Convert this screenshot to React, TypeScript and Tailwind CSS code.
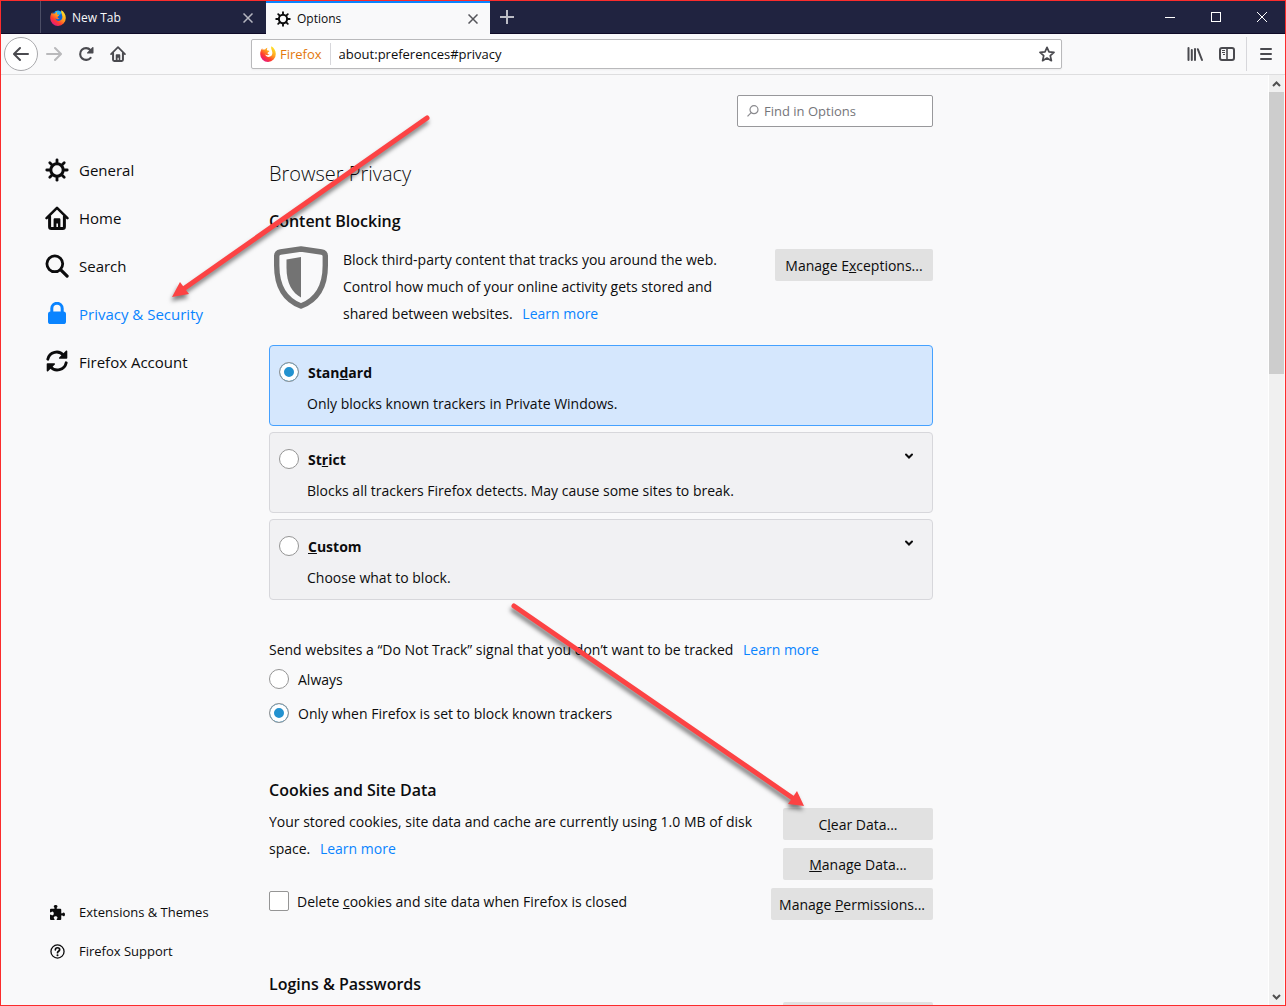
import { useState } from "react";
import type { ReactNode } from "react";

type IconProps = { className?: string };

const GearIcon = ({ className }: IconProps) => (
  <svg viewBox="0 0 24 24" className={className} fill="none" stroke="currentColor" strokeLinecap="round">
    <circle cx="12" cy="12" r="6.2" strokeWidth="3" />
    {[0, 45, 90, 135, 180, 225, 270, 315].map((deg) => (
      <path key={deg} d="M12 5V1.8" strokeWidth="2.8" transform={`rotate(${deg} 12 12)`} />
    ))}
  </svg>
);

const HomeIcon = ({ className }: IconProps) => (
  <svg viewBox="0 0 24 24" className={className} fill="none" stroke="currentColor" strokeLinecap="round" strokeLinejoin="round">
    <path d="M1.6 12.2 12 1.8l10.4 10.4" strokeWidth="2.6" />
    <path d="M4.6 10.5v10.2c0 1 .7 1.7 1.7 1.7h11.4c1 0 1.7-.7 1.7-1.7V10.5" strokeWidth="3" />
    <path d="M8.600 22v-8.400c0-.8.5-1.300 1.300-1.300h4.200c.8 0 1.300.5 1.300 1.300V22h-2.400v-4.500h-1.600V22z" fill="currentColor" stroke="none" />
  </svg>
);

const SearchIcon = ({ className }: IconProps) => (
  <svg viewBox="0 0 24 24" className={className} fill="none" stroke="currentColor" strokeLinecap="round">
    <circle cx="9.8" cy="9.8" r="7.9" strokeWidth="2.8" />
    <path d="m15.8 15.8 6.3 6.3" strokeWidth="3.2" />
  </svg>
);

const LockIcon = ({ className }: IconProps) => (
  <svg viewBox="0 0 24 24" className={className}>
    <path d="M6.8 12V6.500a5.200 5.200 0 0 1 10.400 0V12" fill="none" stroke="currentColor" strokeWidth="3" />
    <rect x="3" y="9.500" width="18" height="12.500" rx="2.600" fill="currentColor" />
  </svg>
);

const SyncIcon = ({ className }: IconProps) => (
  <svg viewBox="0 0 24 24" className={className} fill="none" stroke="currentColor" strokeWidth="2.9" strokeLinecap="round">
    <path d="M2.8 9.200A9 9 0 0 1 18.600 5.400" />
    <path d="M21.200 12.800A9 9 0 0 1 5.400 16.600" />
    <path d="M22.300 1.200V8a.8.8 0 0 1-.8.8h-6.800c-.8 0-1-.8-.5-1.300l6.700-6.800c.5-.5 1.400-.3 1.400.5z" fill="currentColor" stroke="none" />
    <path d="M1.700 20.800V14c0-.5.3-.8.8-.8h6.800c.8 0 1 .8.5 1.300l-6.700 6.800c-.5.5-1.400.3-1.400-.5z" fill="currentColor" stroke="none" />
  </svg>
);

const PuzzleIcon = ({ className }: IconProps) => (
  <svg viewBox="0 0 16 16" className={className} fill="currentColor">
    <path d="M14.5 8c-.971 0-1 1-1.75 1a.765.765 0 0 1-.75-.75V5a1 1 0 0 0-1-1H7.75A.765.765 0 0 1 7 3.25c0-.75 1-.779 1-1.75C8 .635 7.1 0 6 0S4 .635 4 1.5c0 .971 1 1 1 1.75a.765.765 0 0 1-.75.75H1a1 1 0 0 0-1 1v2.25A.765.765 0 0 0 .75 8c.75 0 .779-1 1.75-1C3.365 7 4 7.9 4 9s-.635 2-1.5 2c-.971 0-1-1-1.75-1a.765.765 0 0 0-.75.75V15a1 1 0 0 0 1 1h3.25a.765.765 0 0 0 .75-.75c0-.75-1-.779-1-1.75 0-.865.9-1.5 2-1.5s2 .635 2 1.5c0 .971-1 1-1 1.75a.765.765 0 0 0 .75.75H11a1 1 0 0 0 1-1v-3.25a.765.765 0 0 1 .75-.75c.75 0 .779 1 1.75 1 .865 0 1.5-.9 1.5-2s-.635-2-1.5-2z" />
  </svg>
);

const HelpIcon = ({ className }: IconProps) => (
  <svg viewBox="0 0 16 16" className={className} fill="none" stroke="currentColor" strokeLinecap="round">
    <circle cx="8" cy="8" r="7" strokeWidth="1.4" />
    <path d="M5.7 6.2C5.7 4.8 6.7 4 8 4s2.3.8 2.3 2.1c0 1.6-2.3 1.6-2.3 3.2" strokeWidth="1.8" />
    <circle cx="8" cy="11.9" r="1.1" fill="currentColor" stroke="none" />
  </svg>
);

const ArrowIcon = ({ className }: IconProps) => (
  <svg viewBox="0 0 16 16" className={className} fill="currentColor">
    <path d="M15 7H3.414l4.293-4.293a1 1 0 0 0-1.414-1.414l-6 6a1 1 0 0 0 0 1.414l6 6a1 1 0 0 0 1.414-1.414L3.414 9H15a1 1 0 0 0 0-2z" />
  </svg>
);

const ReloadIcon = ({ className }: IconProps) => (
  <svg viewBox="0 0 16 16" className={className}>
    <path d="M12.4 4A5.9 5.9 0 1 0 12.6 11.8" fill="none" stroke="currentColor" strokeWidth="2.1" strokeLinecap="round" />
    <path d="M15.5 1.6v5.2c0 .4-.3.7-.7.7H9.6c-.6 0-.8-.6-.4-1l5.2-5.3c.4-.4 1.1-.2 1.1.4z" fill="currentColor" />
  </svg>
);

const LibraryIcon = ({ className }: IconProps) => (
  <svg viewBox="0 0 16 16" className={className} fill="none" stroke="currentColor" strokeWidth="2" strokeLinecap="round">
    <path d="M1.500 2v12M4.800 4v10M8 3v11M10.800 3.200 15 14" />
  </svg>
);

const SidebarIcon = ({ className }: IconProps) => (
  <svg viewBox="0 0 16 16" className={className} fill="none" stroke="currentColor">
    <rect x="1" y="2" width="14" height="12" rx="2" strokeWidth="2" />
    <path d="M8 2v12" strokeWidth="1.6" />
    <path d="M3 4.5h3M3 6.5h3M4 8.5h2" strokeWidth="1" />
  </svg>
);

const StarIcon = ({ className }: IconProps) => (
  <svg viewBox="0 0 16 16" className={className} fill="none" stroke="currentColor" strokeWidth="1.7" strokeLinejoin="round">
    <path d="M8 1.3 10 5.9l5 .5-3.7 3.3 1.1 5L8 12.1l-4.4 2.6 1.1-5L1 6.4l5-.5z" />
  </svg>
);

const ShieldIcon = ({ className }: IconProps) => (
  <svg viewBox="0 0 54 63" className={className}>
    <path d="M27 3 47.5 6c2.3.4 3.8 1.8 3.8 4v9.400c0 19-7.300 34-24.300 40.600C10 53.400 2.700 38.400 2.700 19.400V10c0-2.200 1.500-3.600 3.800-4z" fill="none" stroke="currentColor" strokeWidth="5.400" strokeLinejoin="round" />
    <path d="M27 11v40.500c-8.500-4.500-14.500-14-14.500-29.500v-8.500z" fill="currentColor" />
  </svg>
);

const FirefoxLogo = ({ className, globe }: IconProps & { globe?: boolean }) => {
  const id = globe ? "flame-tab" : "flame-url";
  return (
    <svg viewBox="0 0 16 16" className={className}>
      <defs>
        <linearGradient id={id} x1="0.85" y1="0.1" x2="0.2" y2="0.95">
          <stop offset="0" stopColor="#ffe226" />
          <stop offset="0.4" stopColor="#ff9a1f" />
          <stop offset="0.7" stopColor="#ff3b2f" />
          <stop offset="1" stopColor="#e31587" />
        </linearGradient>
      </defs>
      {globe && <circle cx="8" cy="7" r="6.400" fill="#0a64d8" />}
      {globe && <path d="M5 1.500c2-1.100 5-.8 6.500 1L10 5 6 4z" fill="#28b3f5" />}
      <path
        d="M11.300.3c2.700 1.500 4.500 4.300 4.500 7.700A7.800 7.800 0 0 1 .2 8.200C.2 6 .9 3.900 2.200 2.300l.4 1.500c.8-.4 1.700-.5 2.500-.3C5.600 2.600 6.500 2 7.500 1.800 6.900 2.600 6.700 3.400 7 4.100c.5.800 1.800.4 2.300.9.200.7-1.700 1.300-1.700 2-.1 1 .9 1.500 2 1.300-1 1.100-3 1.200-4.400.3.700 2 3 2.900 4.900 2 2.200-1 2.800-3.600 1.900-5.700C11.500 3.600 10.800 2 11.300.3z"
        fill={`url(#${id})`}
      />
    </svg>
  );
};

const CloseIcon = ({ className }: IconProps) => (
  <svg viewBox="0 0 10 10" className={className} fill="none" stroke="currentColor" strokeWidth="1.500">
    <path d="m.5.5 9 9m0-9-9 9" />
  </svg>
);

const navItems = [
  { label: "General", Icon: GearIcon },
  { label: "Home", Icon: HomeIcon },
  { label: "Search", Icon: SearchIcon },
  { label: "Privacy & Security", Icon: LockIcon },
  { label: "Firefox Account", Icon: SyncIcon },
];

const blockingModes = [
  { id: "standard", label: <>Stan<u>d</u>ard</>, text: "Only blocks known trackers in Private Windows.", expandable: false },
  { id: "strict", label: <>St<u>r</u>ict</>, text: "Blocks all trackers Firefox detects. May cause some sites to break.", expandable: true },
  { id: "custom", label: <><u>C</u>ustom</>, text: "Choose what to block.", expandable: true },
];

const radioClass =
  "size-5 shrink-0 appearance-none rounded-full border border-[#959595] bg-white checked:bg-[#2292d0] checked:shadow-[inset_0_0_0_4px_white]";

const PrefButton = ({ children, className = "", label }: { children?: ReactNode; className?: string; label?: string }) => (
  <button aria-label={label} className={`h-8 shrink-0 rounded-xs bg-[#e1e1e1] px-2 pt-px text-sm whitespace-nowrap ${className}`}>
    {children}
  </button>
);

const LearnMore = () => (
  <a href="#learn-more" className="ml-[6px] text-[#0a84ff]">Learn more</a>
);

const TabStrip = () => (
  <div className="flex h-[33px] shrink-0 border-b border-[#0f0b28] bg-[#202340] text-xs text-[#f9f9fa]">
    <div className="w-10 border-r border-[#4c4e66]"></div>
    <div className="flex w-[225px] items-center border-t-2 border-transparent pr-[13px] pl-[9px]">
      <FirefoxLogo globe className="mr-[6px] size-4" />
      <span className="flex-1">New Tab</span>
      <button aria-label="Close New Tab" className="text-[#b5b6c0]"><CloseIcon className="size-[10px]" /></button>
    </div>
    <div className="-mb-px flex w-56 items-center border-t-2 border-[#0a84ff] bg-[#f9f9fa] pr-3 pl-[9px] text-[#0c0c0d]">
      <GearIcon className="mr-[6px] size-4" />
      <span className="flex-1">Options</span>
      <button aria-label="Close Options" className="text-[#55555a]"><CloseIcon className="size-[10px]" /></button>
    </div>
    <button aria-label="New tab" className="flex w-[34px] items-center justify-center text-[#bcbdc6]">
      <svg viewBox="0 0 14 14" className="size-[14px]" stroke="currentColor" strokeWidth="2"><path d="M7 0v14M0 7h14" /></svg>
    </button>
    <div className="ml-auto flex">
      <button aria-label="Minimize" className="flex w-[46px] items-center justify-center">
        <span className="h-px w-[10px] bg-white"></span>
      </button>
      <button aria-label="Maximize" className="flex w-[46px] items-center justify-center">
        <span className="size-[10px] border border-white"></span>
      </button>
      <button aria-label="Close" className="flex w-[46px] items-center justify-center">
        <svg viewBox="0 0 10 10" className="size-[10px]" stroke="white"><path d="m0 0 10 10M10 0 0 10" /></svg>
      </button>
    </div>
  </div>
);

const Toolbar = () => (
  <div className="flex h-[41px] shrink-0 items-center border-b border-[#dededf] pl-[3px] text-[#4a4a4f]">
    <button aria-label="Back" className="flex size-[34px] items-center justify-center rounded-full border border-[#a9a9ac] bg-white">
      <ArrowIcon className="size-4" />
    </button>
    <button aria-label="Forward" className="flex w-8 justify-center text-[#b9b9bb]"><ArrowIcon className="size-4 rotate-180" /></button>
    <button aria-label="Reload" className="flex w-8 justify-center"><ReloadIcon className="size-4" /></button>
    <button aria-label="Home" className="flex w-8 justify-center"><HomeIcon className="size-4" /></button>
    <div className="mr-[117px] ml-[117px] flex h-[30px] flex-1 items-center rounded-xs border border-[#b9b9bb] bg-white pr-[6px] pl-2 shadow-xs">
      <FirefoxLogo className="size-4" />
      <span className="ml-1 border-r border-[#d7d7db] pt-[2px] pr-2 text-[13px] text-[#e3780b]">Firefox</span>
      <input
        aria-label="Address"
        defaultValue="about:preferences#privacy"
        className="min-w-0 flex-1 bg-transparent pt-[2px] pl-2 text-[13px] text-[#0c0c0d] outline-none"
      />
      <button aria-label="Bookmark this page"><StarIcon className="size-4" /></button>
    </div>
    <button aria-label="Library" className="flex w-8 justify-center"><LibraryIcon className="size-4" /></button>
    <button aria-label="Sidebars" className="flex w-8 justify-center"><SidebarIcon className="size-4" /></button>
    <div className="ml-[3px] h-[34px] border-l border-[#d7d7db]"></div>
    <button aria-label="Menu" className="flex w-[38px] justify-center">
      <svg viewBox="0 0 12 12" className="size-3" stroke="currentColor" strokeWidth="2" strokeLinecap="round"><path d="M1 1h10M1 6h10M1 11h10" /></svg>
    </button>
  </div>
);

const Sidebar = () => (
  <nav className="flex w-[268px] shrink-0 flex-col pt-[71px] pb-[34px] pl-11 text-[#0c0c0d]">
    {navItems.map(({ label, Icon }) => (
      <a
        key={label}
        href="#category"
        className={`flex h-12 items-center gap-[10px] text-[15px] ${label === "Privacy & Security" ? "text-[#0a84ff]" : ""}`}
      >
        <Icon className="size-6" />
        {label}
      </a>
    ))}
    <a href="#extensions" className="mt-auto flex h-[39px] items-center text-[13px]">
      <PuzzleIcon className="mr-[14px] ml-[5px] size-[15px]" />
      Extensions &amp; Themes
    </a>
    <a href="#support" className="flex h-[39px] items-center text-[13px]">
      <HelpIcon className="mr-[14px] ml-[5px] size-[15px]" />
      Firefox Support
    </a>
  </nav>
);

const Scrollbar = () => (
  <div className="mr-px flex w-4 shrink-0 flex-col items-center border-l border-white bg-[#f0f0f0] text-[#505050]">
    <svg viewBox="0 0 15 17" className="h-[17px] w-[15px]" fill="none" stroke="currentColor" strokeWidth="2"><path d="m4 11 3.500-3.500L11 11" /></svg>
    <div className="h-[282px] w-full bg-[#cdcdcd]"></div>
    <svg viewBox="0 0 15 17" className="mt-auto h-[17px] w-[15px]" fill="none" stroke="currentColor" strokeWidth="2"><path d="m4 7 3.500 3.500L11 7" /></svg>
  </div>
);

// Red callout arrows drawn over the page
const Callouts = () => (
  <svg className="pointer-events-none absolute top-0 left-0 h-full w-full" fill="#fc4344" stroke="#fc4344">
    <g style={{ filter: "drop-shadow(-1px 4px 2px rgba(0,0,0,0.5))" }}>
      <path d="M426 117 181 289" strokeWidth="5" strokeLinecap="round" />
      <path d="m171 296 8-15 9 12z" stroke="none" />
    </g>
    <g style={{ filter: "drop-shadow(-1px 4px 2px rgba(0,0,0,0.5))" }}>
      <path d="M513 605 793 798" strokeWidth="5" strokeLinecap="round" />
      <path d="m803 805-16-2 9-13z" stroke="none" />
    </g>
  </svg>
);

const App = () => {
  const [mode, setMode] = useState("standard");

  return (
    <div className="relative flex h-screen flex-col overflow-hidden border border-[#fb2c2c] bg-[#f9f9fa] font-['Open_Sans',sans-serif] text-[#0c0c0d]">
      <TabStrip />
      <Toolbar />
      <div className="flex min-h-0 flex-1">
        <Sidebar />
        <main className="min-w-0 flex-1 overflow-hidden pt-5 text-sm">
          <div className="max-w-[664px]">
            <label className="ml-auto flex h-8 w-[196px] items-center rounded-xs border border-[#98989b] bg-white pl-[9px]">
              <svg viewBox="0 0 12 12" className="size-3 text-[#8a8a8e]" fill="none" stroke="currentColor" strokeWidth="1.200">
                <circle cx="7" cy="4.700" r="4" />
                <path d="M4.200 7.600.5 11.400" />
              </svg>
              <input aria-label="Find in Options" placeholder="Find in Options" className="ml-[5px] w-40 text-[13px] outline-none placeholder:text-[#75757a]" />
            </label>

            <h1 className="mt-[33px] text-xl leading-7 font-light">Browser Privacy</h1>

            <section>
              <h2 className="mt-[21px] text-base leading-6 font-semibold">Content Blocking</h2>
              <div className="mt-[13px] flex items-start">
                <ShieldIcon className="mx-[5px] h-[63px] w-[54px] shrink-0 text-[#737373]" />
                <p className="ml-[10px] max-w-[400px] leading-[27px]">
                  Block third-party content that tracks you around the web. Control how much of your online activity gets stored and shared between websites. <LearnMore />
                </p>
                <PrefButton className="mt-[3px] ml-auto w-[158px]">Manage E<u>x</u>ceptions...</PrefButton>
              </div>

              <div className="mt-[18px] flex flex-col gap-[6px]">
                {blockingModes.map(({ id, label, text, expandable }) => (
                  <div
                    key={id}
                    className={`flex h-[81px] items-start rounded-sm border pt-4 pl-[9px] ${
                      mode === id ? "border-[#45a1ff] bg-[#d5e7fd]" : "border-[#d7d7db] bg-[#f1f1f3]"
                    }`}
                  >
                    <input type="radio" id={id} name="blocking" checked={mode === id} onChange={() => setMode(id)} className={radioClass} />
                    <div className="ml-2 flex-1">
                      <label htmlFor={id} className="block pl-px leading-[22px] font-bold">{label}</label>
                      <p className="mt-[9px] leading-[22px]">{text}</p>
                    </div>
                    {expandable && (
                      <button aria-label="Show details" className="mt-[3px] mr-[18px]">
                        <svg viewBox="0 0 10 8" className="h-2 w-[10px]" fill="none" stroke="currentColor" strokeWidth="2" strokeLinecap="round"><path d="m2 2.500 3 3 3-3" /></svg>
                      </button>
                    )}
                  </div>
                ))}
              </div>

              <p className="mt-9 leading-[27px]">
                Send websites a “Do Not Track” signal that you don’t want to be tracked <LearnMore />
              </p>
              <div className="mt-[6px] flex h-5 items-center gap-[9px]">
                <input type="radio" id="dnt-always" name="dnt" className={radioClass} />
                <label htmlFor="dnt-always" className="pt-px">Always</label>
              </div>
              <div className="mt-[14px] flex h-5 items-center gap-[9px]">
                <input type="radio" id="dnt-default" name="dnt" defaultChecked className={radioClass} />
                <label htmlFor="dnt-default" className="pt-px">Only when Firefox is set to block known trackers</label>
              </div>
            </section>

            <section className="mt-[55px]">
              <h2 className="text-base leading-6 font-semibold">Cookies and Site Data</h2>
              <div className="mt-[6px] flex justify-between">
                <div>
                  <p className="max-w-[496px] leading-[27px]">
                    Your stored cookies, site data and cache are currently using 1.0 MB of disk space. <LearnMore />
                  </p>
                  <div className="mt-[29px] flex h-5 items-center gap-2">
                    <input type="checkbox" id="delete-cookies" className="size-5 appearance-none rounded-xs border border-[#959595] bg-white" />
                    <label htmlFor="delete-cookies" className="pt-px">Delete <u>c</u>ookies and site data when Firefox is closed</label>
                  </div>
                </div>
                <div className="flex flex-col items-end gap-2">
                  <PrefButton className="w-[150px]">C<u>l</u>ear Data...</PrefButton>
                  <PrefButton className="w-[150px]"><u>M</u>anage Data...</PrefButton>
                  <PrefButton>Manage <u>P</u>ermissions...</PrefButton>
                </div>
              </div>
            </section>

            <section className="mt-[52px]">
              <h2 className="text-base leading-6 font-semibold">Logins &amp; Passwords</h2>
              <div className="mt-[6px] flex justify-end">
                <PrefButton className="w-[150px]" label="Exceptions" />
              </div>
            </section>
          </div>
        </main>
        <Scrollbar />
      </div>
      <Callouts />
    </div>
  );
};

export default App;
